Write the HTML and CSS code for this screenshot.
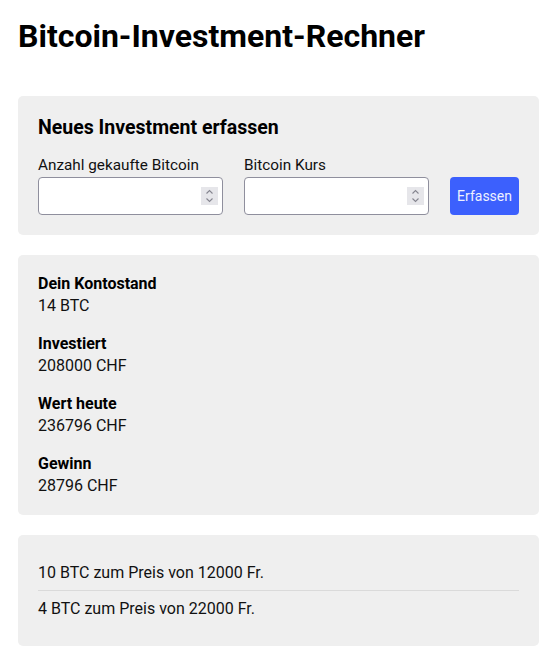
FILE: index.html
```html
<!DOCTYPE html>
<html lang="de">
<head>
<meta charset="utf-8">
<title>Bitcoin-Investment-Rechner</title>
<link rel="stylesheet" href="styles.css">
</head>
<body>
<main class="page">
  <h1 class="title">Bitcoin-Investment-Rechner</h1>

  <section class="card form-card">
    <h2 class="card-title">Neues Investment erfassen</h2>
    <div class="form-row">
      <div class="field">
        <label class="field-label" for="amount">Anzahl gekaufte Bitcoin</label>
        <div class="input-wrap">
          <input class="input" id="amount" type="number">
          <span class="spinner">
            <svg width="9" height="14" viewBox="0 0 9 14"><path d="M1.5 4.5 L4.5 1.5 L7.5 4.5 M1.5 9.5 L4.5 12.5 L7.5 9.5" fill="none" stroke="#85858f" stroke-width="1.1"/></svg>
          </span>
        </div>
      </div>
      <div class="field">
        <label class="field-label" for="price">Bitcoin Kurs</label>
        <div class="input-wrap">
          <input class="input" id="price" type="number">
          <span class="spinner">
            <svg width="9" height="14" viewBox="0 0 9 14"><path d="M1.5 4.5 L4.5 1.5 L7.5 4.5 M1.5 9.5 L4.5 12.5 L7.5 9.5" fill="none" stroke="#85858f" stroke-width="1.1"/></svg>
          </span>
        </div>
      </div>
      <button class="btn" type="button">Erfassen</button>
    </div>
  </section>

  <section class="card stats-card">
    <div class="stat">
      <div class="stat-label">Dein Kontostand</div>
      <div class="stat-value">14 BTC</div>
    </div>
    <div class="stat">
      <div class="stat-label">Investiert</div>
      <div class="stat-value">208000 CHF</div>
    </div>
    <div class="stat">
      <div class="stat-label">Wert heute</div>
      <div class="stat-value">236796 CHF</div>
    </div>
    <div class="stat">
      <div class="stat-label">Gewinn</div>
      <div class="stat-value">28796 CHF</div>
    </div>
  </section>

  <section class="card list-card">
    <ul class="purchases">
      <li class="purchase">10 BTC zum Preis von 12000 Fr.</li>
      <li class="purchase">4 BTC zum Preis von 22000 Fr.</li>
    </ul>
  </section>
</main>
</body>
</html>
```
FILE: styles.css
```css
* { box-sizing: border-box; }

body {
  margin: 0;
  background: #ffffff;
  color: #111111;
  font-family: "Roboto", "Liberation Sans", sans-serif;
}

.page {
  padding: 0 18px;
  display: flex;
  flex-direction: column;
  gap: 20px;
}

.title {
  margin: 17px 0 21px;
  font-size: 32px;
  line-height: 38px;
  font-weight: 700;
  color: #000;
}

.card {
  background: #efefef;
  border-radius: 5px;
}

.form-card {
  padding: 20px;
}

.card-title {
  margin: 0 0 13px;
  font-size: 19.5px;
  line-height: 24px;
  font-weight: 700;
  color: #000;
}

.form-row {
  display: grid;
  grid-template-columns: 1fr 1fr auto;
  column-gap: 21px;
  align-items: end;
}

.field {
  display: flex;
  flex-direction: column;
}

.field-label {
  font-size: 15.3px;
  line-height: 24px;
}

.input-wrap {
  position: relative;
}

.input {
  display: block;
  width: 100%;
  height: 38px;
  margin: 0;
  padding: 0 28px 0 10px;
  border: 1px solid #8f8f9d;
  border-radius: 4px;
  background: #fff;
  font: inherit;
  font-size: 15px;
  -moz-appearance: textfield;
}

.input::-webkit-outer-spin-button,
.input::-webkit-inner-spin-button {
  -webkit-appearance: none;
  margin: 0;
}

.spinner {
  position: absolute;
  top: 10px;
  right: 5px;
  width: 17px;
  height: 18px;
  background: #e6e6ea;
  display: flex;
  align-items: center;
  justify-content: center;
}

.spinner svg { display: block; }

.btn {
  height: 38px;
  margin: 0;
  padding: 0 7px;
  border: none;
  border-radius: 4px;
  background: #3c60fd;
  color: #eef1ff;
  font-family: inherit;
  font-size: 14px;
}

.stats-card {
  padding: 18px 20px 18px;
  display: flex;
  flex-direction: column;
  gap: 16px;
}

.stat-label {
  font-size: 16px;
  line-height: 22px;
  font-weight: 700;
  color: #000;
}

.stat-value {
  font-size: 16px;
  line-height: 22px;
}

.list-card {
  padding: 20px;
}

.purchases {
  list-style: none;
  margin: 0;
  padding: 0;
}

.purchase {
  padding: 7px 0 6px;
  font-size: 16px;
  line-height: 22px;
}

.purchase + .purchase {
  border-top: 1px solid #dadada;
}
```
